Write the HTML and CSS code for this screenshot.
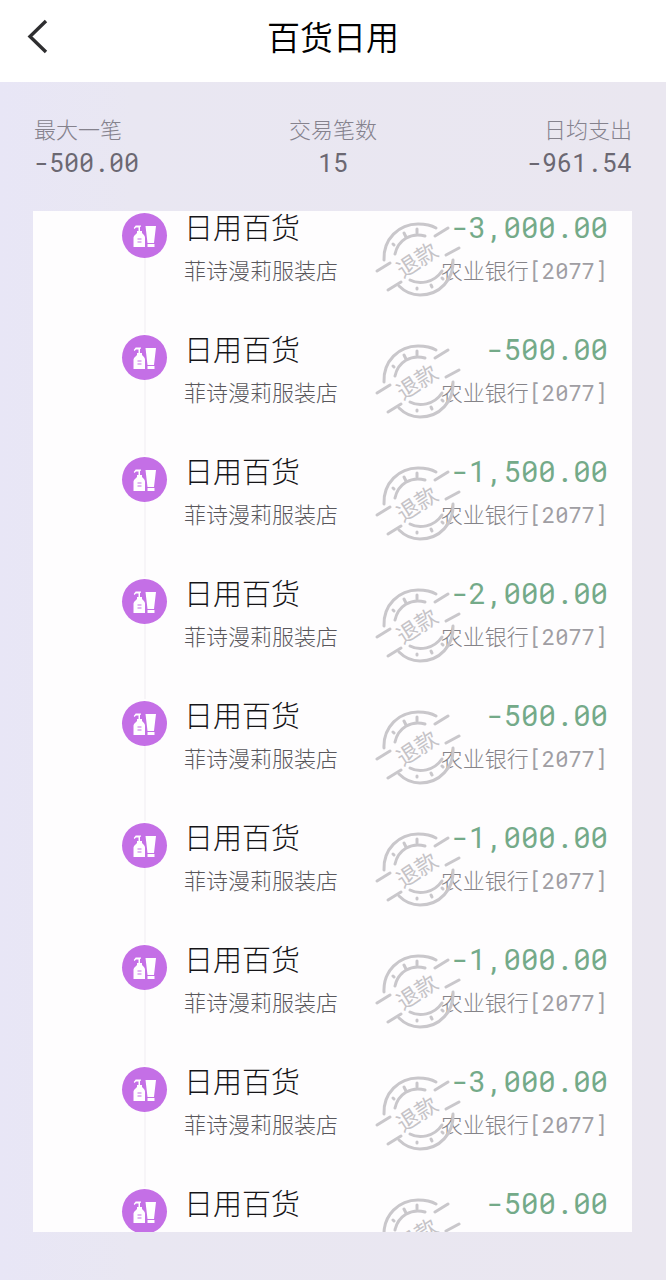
FILE: index.html
```html
<!DOCTYPE html>
<html lang="zh-CN">
<head>
<meta charset="utf-8">
<meta name="viewport" content="width=device-width, initial-scale=1">
<title>百货日用</title>
<link rel="stylesheet" href="styles.css">
</head>
<body>
<svg class="defs" aria-hidden="true">
  <symbol id="toiletries" viewBox="0 0 45 45">
    <path fill="#fff" d="M11.500 34V24.500q0-1.500 2-3l1.500-1.500v-2h5v2l1.500 1.500q1.500 1.500 1.500 3V34z"/>
    <path fill="#fff" d="M16.500 18v-3.500h-2.500l-1.500 1.500-.8-1 2-2.500h5.300v1.300h-1V18z"/>
    <path fill="#fff" d="M23.500 13H34l-2 17h-6.500zM25.500 31h7v3h-7z"/>
    <path stroke="#c46fe6" stroke-width="1.200" d="M15.500 26h4M15.500 29h4"/>
  </symbol>
  <symbol id="stamp" viewBox="0 0 96 88">
    <g fill="none" stroke="#c9c7cb" stroke-width="3" stroke-linecap="round">
      <path d="M14 45C13 24 29 9 48 9C55 9 61 10 66 13M29 71C37 79 44 80 50 80C70 80 84 64 83 45"/>
      <path d="M25 39C28 25 41 17 55 21M40 65C49 70 64 68 72 56"/>
      <path d="M7 56L20 48M65 21L78 13M76 40L89 33M18 75L31 67"/>
      <path d="M23 29l1 1M34 18l2 4M47 14v4M47 73v1M61 70l1 2M72 63l1 1"/>
    </g>
    <text class="stamp-text" x="47" y="53" text-anchor="middle" transform="rotate(-33 47 45)">退款</text>
  </symbol>
</svg>

<header class="topbar">
  <button class="back" type="button" aria-label="返回">
    <svg width="24" height="36" viewBox="0 0 24 36" aria-hidden="true"><path d="M20 3L4 18.500L20 34" fill="none" stroke="#2e2e30" stroke-width="3.400"/></svg>
  </button>
  <h1 class="title">百货日用</h1>
</header>

<main class="content">
  <dl class="summary">
    <div class="stat"><dt>最大一笔</dt><dd>-500.00</dd></div>
    <div class="stat"><dt>交易笔数</dt><dd>15</dd></div>
    <div class="stat"><dt>日均支出</dt><dd>-961.54</dd></div>
  </dl>
  <ul class="list" id="list"></ul>
</main>
<script src="app.js"></script>
</body>
</html>
```
FILE: styles.css
```css
* {
  box-sizing: border-box;
}

body {
  margin: 0;
  height: 100vh;
  display: flex;
  flex-direction: column;
  background: linear-gradient(90deg, #e8e6f6, #e9e7f2 20%, #eae7f0);
  font-family: "Roboto Mono", "Liberation Mono", "Noto Sans CJK SC", monospace;
  font-weight: 400;
}

.defs {
  position: absolute;
  width: 0;
  height: 0;
}

.topbar {
  display: grid;
  grid-template-columns: 48px 1fr 48px;
  align-items: center;
  height: 82px;
  padding: 0 26px 10px;
  background: #fff;
}

.back {
  display: flex;
  padding: 0;
  border: 0;
  background: none;
}

.title {
  margin: 0;
  text-align: center;
  font-family: "Noto Sans CJK SC", sans-serif;
  font-size: 33px;
  font-weight: 350;
  line-height: 48px;
  color: #000;
}

.content {
  flex: 1;
  min-height: 0;
  display: flex;
  flex-direction: column;
  padding: 30px 34px 48px;
}

.summary {
  display: grid;
  grid-template-columns: 1fr 1fr 1fr;
  margin: 0 0 32px;
}

.stat {
  text-align: center;
}

.stat:first-child {
  text-align: left;
}

.stat:last-child {
  text-align: right;
}

.stat dt {
  padding-bottom: 3px;
  font-family: "Noto Sans CJK SC", sans-serif;
  font-size: 22px;
  font-weight: 300;
  line-height: 32px;
  color: #85828d;
}

.stat dd {
  margin: 0;
  font-size: 25px;
  line-height: 32px;
  color: #6b6872;
}

.list {
  flex: 1;
  min-height: 0;
  margin: 0 0 0 -1px;
  padding: 0;
  list-style: none;
  overflow-y: auto;
  scrollbar-width: none;
  background: #fefdfe;
}

.row {
  position: relative;
  display: flex;
  gap: 17px;
  height: 122px;
  padding: 0 24px 0 89px;
}

.track {
  display: flex;
  flex-direction: column;
  align-items: center;
}

.track::before {
  content: "";
  width: 2px;
  height: 2px;
}

.track::after {
  content: "";
  flex: 1;
  width: 2px;
  background: #f7f5f8;
}

.icon {
  width: 45px;
  height: 45px;
  border-radius: 50%;
  background: #c46fe6;
}

.info {
  flex: 1;
}

.name,
.shop,
.amount,
.bank {
  margin: 0;
}

.name,
.shop {
  font-family: "Noto Sans CJK SC", sans-serif;
  font-weight: 300;
}

.name {
  font-size: 29px;
  line-height: 30px;
  color: #161518;
}

.amount {
  font-size: 29px;
  line-height: 32px;
  color: #74aa89;
}

.shop,
.bank {
  padding-top: 13px;
  font-size: 22px;
  line-height: 30px;
}

.shop {
  color: #59575c;
}

.money {
  text-align: right;
}

.bank {
  color: #a09ea3;
}

.bank-name {
  font-weight: 300;
  color: #858388;
}

.stamp {
  position: absolute;
  top: 4px;
  right: 166px;
  width: 96px;
  height: 88px;
}

.stamp-text {
  font-family: "Noto Sans CJK SC", sans-serif;
  font-size: 22px;
  font-weight: 400;
  fill: #c5c3c7;
}
```
FILE: app.js
```js
const amounts = ["-3,000.00", "-500.00", "-1,500.00", "-2,000.00", "-500.00", "-1,000.00", "-1,000.00", "-3,000.00", "-500.00"];

document.getElementById("list").innerHTML = amounts.map((amount) => `
  <li class="row">
    <div class="track"><svg class="icon" aria-hidden="true"><use href="#toiletries"/></svg></div>
    <div class="info">
      <p class="name">日用百货</p>
      <p class="shop">菲诗漫莉服装店</p>
    </div>
    <div class="money">
      <p class="amount">${amount}</p>
      <p class="bank"><span class="bank-name">农业银行</span>[2077]</p>
    </div>
    <svg class="stamp" role="img" aria-label="退款"><use href="#stamp"/></svg>
  </li>`).join("");
```
